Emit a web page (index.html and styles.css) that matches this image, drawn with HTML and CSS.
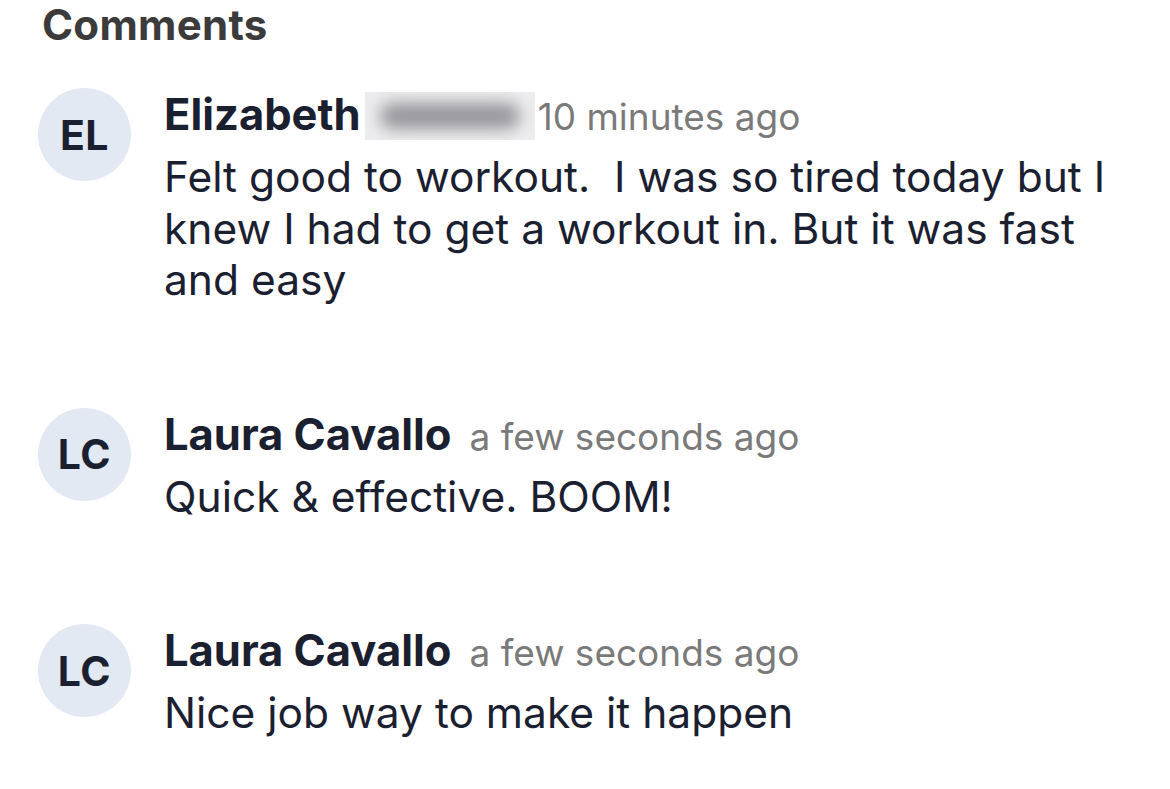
FILE: index.html
```html
<!DOCTYPE html>
<html>
<head>
<meta charset="utf-8">
<link rel="stylesheet" href="styles.css">
</head>
<body>
<div class="page">
  <h1 class="title">Comments</h1>
  <div class="comments">
    <div class="comment">
      <div class="avatar">EL</div>
      <div class="content">
        <div class="meta"><span class="name">Elizabeth</span><span class="redacted"><span class="redacted-blob"></span></span><span class="time">10 minutes ago</span></div>
        <div class="body">Felt good to workout.&nbsp; I was so tired today but I knew I had to get a workout in. But it was fast and easy</div>
      </div>
    </div>
    <div class="comment">
      <div class="avatar">LC</div>
      <div class="content">
        <div class="meta"><span class="name">Laura Cavallo</span><span class="time">a few seconds ago</span></div>
        <div class="body">Quick &amp; effective. BOOM!</div>
      </div>
    </div>
    <div class="comment">
      <div class="avatar">LC</div>
      <div class="content">
        <div class="meta"><span class="name">Laura Cavallo</span><span class="time">a few seconds ago</span></div>
        <div class="body">Nice job way to make it happen</div>
      </div>
    </div>
  </div>
</div>
</body>
</html>
```
FILE: styles.css
```css
html, body {
  margin: 0;
  padding: 0;
  background: #ffffff;
}
body {
  font-family: Inter, "Noto Sans", sans-serif;
  color: #1b2030;
}
.page {
  padding: 0 40px 0 38px;
  width: 1170px;
  box-sizing: border-box;
}
.title {
  margin: 0 0 0 4px;
  font-size: 42px;
  line-height: 50px;
  font-weight: 700;
  color: #3b3b3b;
  letter-spacing: 0.3px;
}
.comments {
  display: flex;
  flex-direction: column;
  gap: 102px;
  margin-top: 38px;
}
.comment {
  display: flex;
  align-items: flex-start;
  gap: 33px;
}
.avatar {
  flex: none;
  width: 93px;
  height: 93px;
  border-radius: 50%;
  background: #e3e9f2;
  display: flex;
  align-items: center;
  justify-content: center;
  font-size: 41px;
  font-weight: 700;
  color: #1b2030;
  letter-spacing: 0.5px;
}
.content {
  flex: 1;
  width: 950px;
}
.meta {
  display: flex;
  align-items: baseline;
  line-height: 52px;
  white-space: nowrap;
}
.name {
  font-size: 43.5px;
  font-weight: 700;
  color: #1b2030;
  margin-right: 18px;
}
.redacted {
  align-self: center;
  display: flex;
  align-items: center;
  justify-content: center;
  width: 170px;
  height: 48px;
  margin-left: -14px;
  margin-right: 3px;
  background: #ededef;
  overflow: hidden;
}
.redacted-blob {
  display: block;
  width: 140px;
  height: 26px;
  border-radius: 13px;
  background: #96969c;
  filter: blur(8px);
}
.time {
  font-size: 37px;
  color: #7a7a7a;
}
.body {
  font-size: 42.5px;
  line-height: 51.5px;
  color: #1b2030;
  width: 950px;
  margin-top: 8px;
}
```
